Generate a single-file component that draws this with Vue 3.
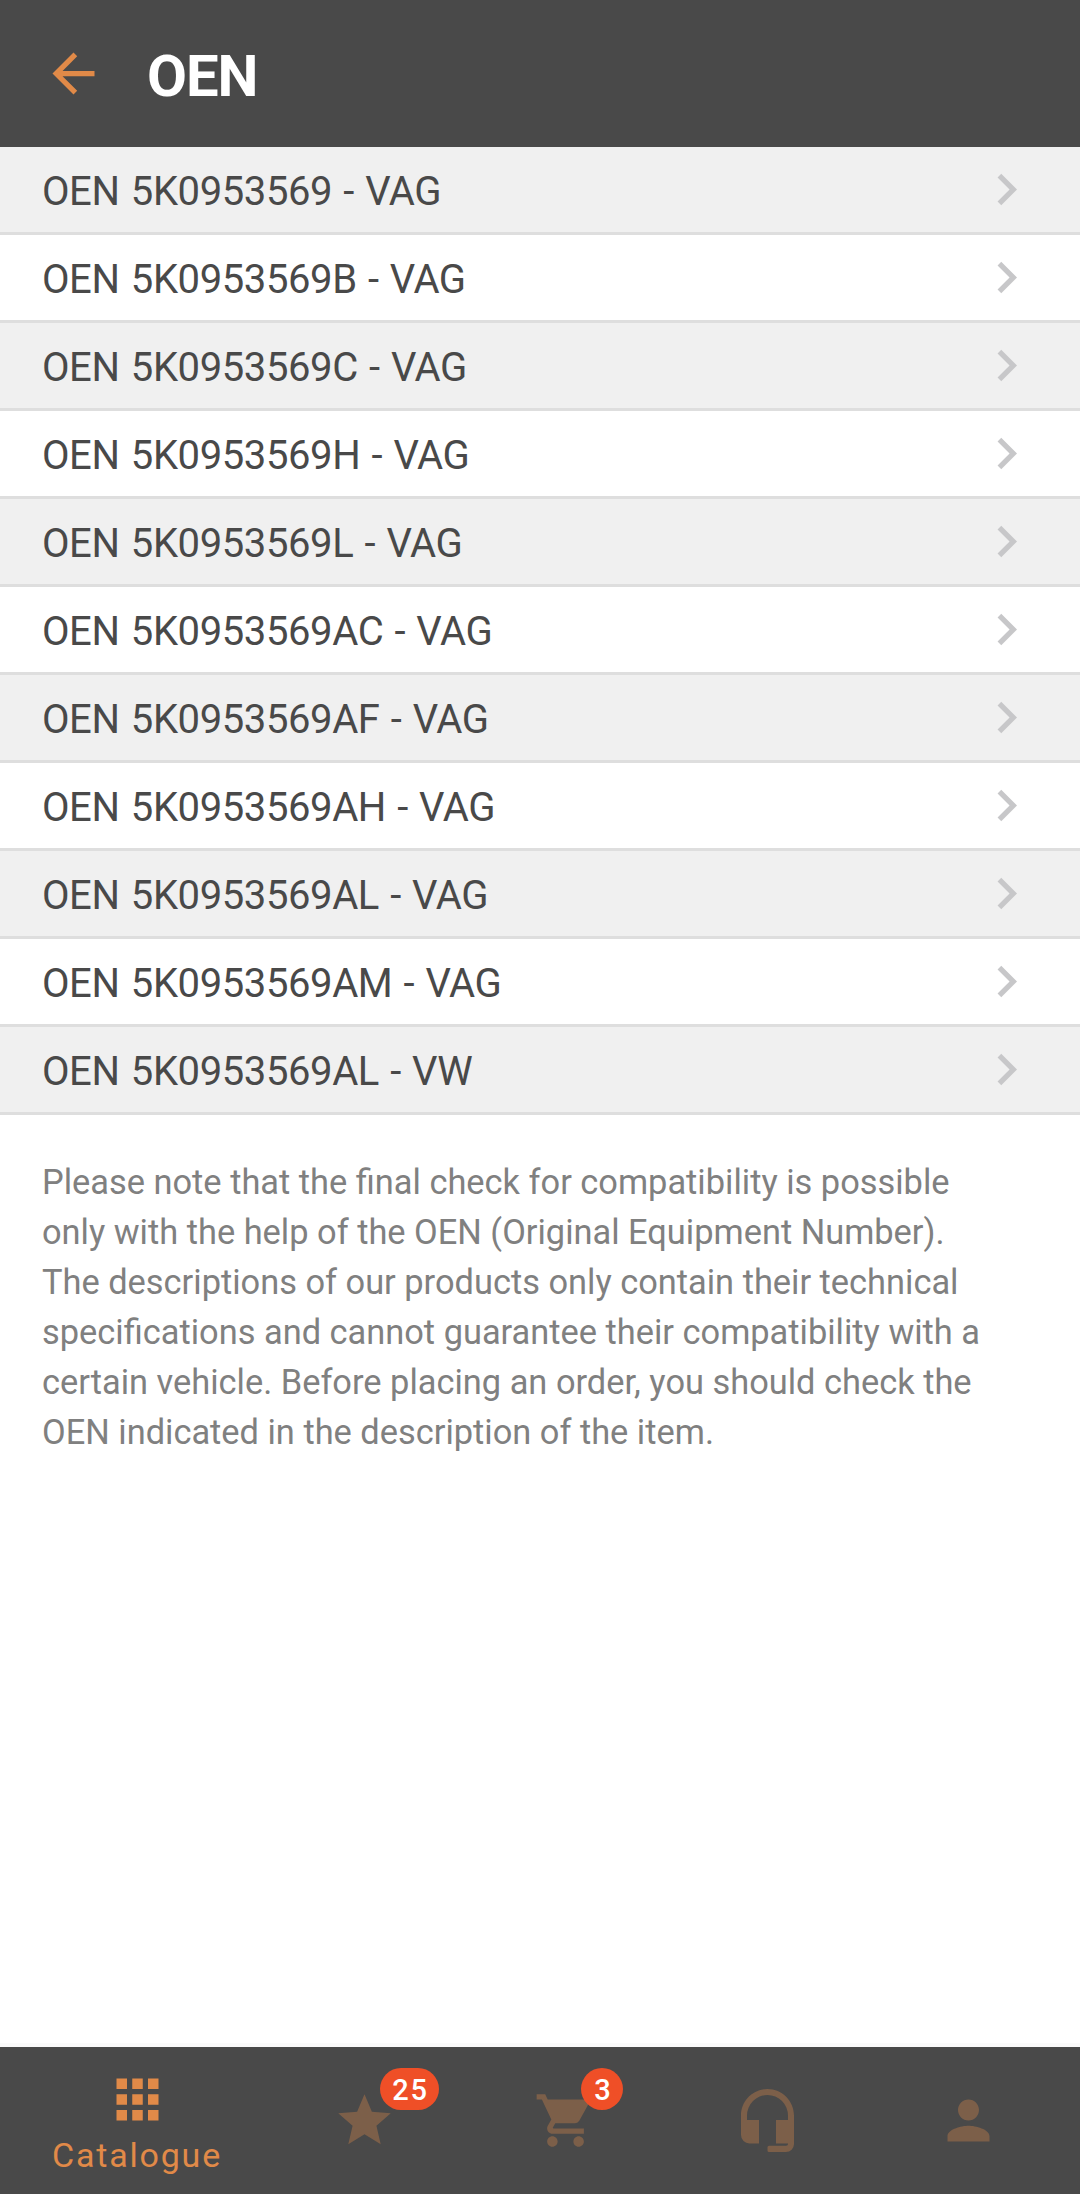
<script setup>
import { ref } from 'vue'

const numbers = ref([
  'OEN 5K0953569 - VAG',
  'OEN 5K0953569B - VAG',
  'OEN 5K0953569C - VAG',
  'OEN 5K0953569H - VAG',
  'OEN 5K0953569L - VAG',
  'OEN 5K0953569AC - VAG',
  'OEN 5K0953569AF - VAG',
  'OEN 5K0953569AH - VAG',
  'OEN 5K0953569AL - VAG',
  'OEN 5K0953569AM - VAG',
  'OEN 5K0953569AL - VW'
])

const tabs = [
  {
    name: 'catalogue',
    label: 'Catalogue',
    active: true,
    path: 'M4 8h4V4H4v4zm6 12h4v-4h-4v4zm-6 0h4v-4H4v4zm0-6h4v-4H4v4zm6 0h4v-4h-4v4zm6-10v4h4V4h-4zm-6 4h4V4h-4v4zm6 6h4v-4h-4v4zm0 6h4v-4h-4v4z'
  },
  {
    name: 'favourites',
    badge: 25,
    path: 'M12 17.27L18.18 21l-1.64-7.03L22 9.24l-7.19-.61L12 2 9.19 8.63 2 9.24l5.46 4.73L5.82 21z'
  },
  {
    name: 'cart',
    badge: 3,
    path: 'M7 18c-1.1 0-1.99.9-1.99 2S5.9 22 7 22s2-.9 2-2-.9-2-2-2zM1 2v2h2l3.6 7.59-1.35 2.45c-.16.28-.25.61-.25.96 0 1.1.9 2 2 2h12v-2H7.42c-.14 0-.25-.11-.25-.25l.03-.12.9-1.63h7.45c.75 0 1.41-.41 1.75-1.03l3.58-6.49c.08-.14.12-.31.12-.48 0-.55-.45-1-1-1H5.21l-.94-2H1zm16 16c-1.1 0-1.99.9-1.99 2s.89 2 1.99 2 2-.9 2-2-.9-2-2-2z'
  },
  {
    name: 'support',
    viewBox: '0 0 63 63',
    path: 'M31.5 0C16.9 0 5 11.9 5 26.5V46a8.500 8.500 0 0 0 8.500 8.500H23V31H11v-4.500a20.500 20.500 0 0 1 41 0V31H40v23.500h12a2 2 0 0 1-2 2.200H33a1.500 1.500 0 0 0-1.500 1.500V61.500a1.500 1.500 0 0 0 1.500 1.500h17a8 8 0 0 0 8-8V26.500C58 11.900 46.100 0 31.500 0z'
  },
  {
    name: 'profile',
    path: 'M12 12c2.21 0 4-1.79 4-4s-1.79-4-4-4-4 1.79-4 4 1.79 4 4 4zm0 2c-2.67 0-8 1.34-8 4v2h16v-2c0-2.66-5.33-4-8-4z'
  }
]
</script>

<template>
  <div class="screen">
    <header class="header">
      <svg class="back" viewBox="0 0 24 24">
        <path d="M20 11H7.83l5.59-5.59L12 4l-8 8 8 8 1.41-1.41L7.83 13H20v-2z" />
      </svg>
      <h1>OEN</h1>
    </header>

    <main class="content">
      <ul class="list">
        <li class="row" v-for="(item, idx) in numbers" :key="idx">
          <span class="number">{{ item }}</span>
          <svg class="chevron" viewBox="0 0 24 24">
            <path d="M10 6L8.59 7.41 13.17 12l-4.58 4.59L10 18l6-6z" />
          </svg>
        </li>
      </ul>
      <p class="note">
        Please note that the final check for compatibility is possible only with the help of the OEN
        (Original Equipment Number). The descriptions of our products only contain their technical
        specifications and cannot guarantee their compatibility with a certain vehicle. Before
        placing an order, you should check the OEN indicated in the description of the item.
      </p>
    </main>

    <nav class="tabs">
      <div class="tab" v-for="tab in tabs" :key="tab.name" :class="{ active: tab.active }">
        <div class="icon">
          <svg :viewBox="tab.viewBox || '0 0 24 24'"><path :d="tab.path" /></svg>
          <span class="badge" v-if="tab.badge">{{ tab.badge }}</span>
        </div>
        <span class="label" v-if="tab.label">{{ tab.label }}</span>
      </div>
    </nav>
  </div>
</template>

<style>
body { background: #fff; }
</style>

<style scoped>
.screen {
  display: flex;
  flex-direction: column;
  height: 2194px;
  font-family: Roboto, "Liberation Sans", sans-serif;
}
.header {
  display: flex;
  align-items: center;
  height: 147px;
  padding-left: 42px;
  background: #494949;
}
.back { width: 63px; height: 63px; fill: #e18a48; }
h1 {
  margin: 4px 0 0 42px;
  font-size: 58px;
  font-weight: 700;
  line-height: 68px;
  letter-spacing: -1px;
  color: #fff;
}
.content { flex: 1; }
.list { margin: 0; padding: 0; list-style: none; }
.row {
  display: flex;
  align-items: center;
  justify-content: space-between;
  box-sizing: border-box;
  height: 88px;
  padding: 0 42px;
  border-bottom: 3px solid #dedede;
  font-size: 40px;
  line-height: 47px;
  color: #494949;
}
.row:nth-child(odd) { background: #f0f0f0; }
.number { padding-top: 3px; letter-spacing: -0.4px; word-spacing: 1.7px; }
.chevron { width: 63px; height: 63px; fill: #c7c7c9; }
.note {
  margin: 42px 90px 0 42px;
  font-size: 34.4px;
  line-height: 50px;
  color: #808080;
}
.tabs {
  display: flex;
  box-sizing: border-box;
  height: 147px;
  padding: 0 11px 0 10px;
  background: #494949;
  box-shadow: 0 -4px 0 #fafafa;
}
.tab {
  display: flex;
  flex-direction: column;
  align-items: center;
  justify-content: center;
  flex: 1;
  color: #7c5f49;
}
.tab.active { flex: 0 0 254px; padding-top: 2px; color: #e18a48; }
.icon { position: relative; width: 63px; height: 63px; }
.icon svg { display: block; width: 63px; height: 63px; fill: currentColor; }
.label { margin-top: 3px; font-size: 34px; line-height: 42px; letter-spacing: 1.8px; }
.badge {
  position: absolute;
  top: -21px;
  left: 47px;
  box-sizing: border-box;
  min-width: 42px;
  height: 42px;
  padding: 0 10px 0 12px;
  border-radius: 21px;
  background: #ef4f27;
  color: #fff;
  font-size: 29px;
  font-weight: 500;
  line-height: 44px;
  letter-spacing: 2px;
  text-align: center;
}
</style>
